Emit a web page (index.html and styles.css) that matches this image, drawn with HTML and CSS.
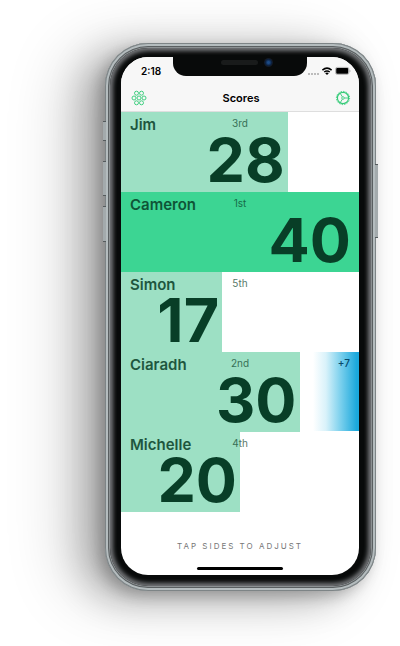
FILE: index.html
```html
<!DOCTYPE html>
<html lang="en">
<head>
<meta charset="utf-8">
<meta name="viewport" content="width=device-width, initial-scale=1">
<title>Scores</title>
<link rel="stylesheet" href="styles.css">
</head>
<body>
<main class="phone">
  <span class="side side-mute"></span>
  <span class="side side-up"></span>
  <span class="side side-down"></span>
  <span class="side side-power"></span>
  <div class="bezel">
    <div class="screen">
      <div class="status">
        <span class="time">2:18</span>
        <div class="notch"><span class="speaker"></span><span class="camera"></span></div>
        <div class="signals">
          <svg width="43" height="10" viewBox="0 0 43 10" aria-hidden="true">
            <g fill="#bcbcbc"><rect x="0" y="7" width="2" height="2"/><rect x="3" y="7" width="2" height="2"/><rect x="6" y="7" width="2" height="2"/><rect x="9" y="7" width="2" height="2"/></g>
            <g fill="none" stroke="#000" stroke-width="1.5"><path d="M14.4 4.1Q19 .2 23.6 4.1"/><path d="M16.2 6Q19 3.8 21.8 6"/></g>
            <path d="M17.2 7.2Q19 6 20.8 7.2L19 9z"/>
            <rect x="27.5" y="1.4" width="13.4" height="7" rx="1.8" fill="none" stroke="#999" stroke-width=".7"/>
            <rect x="28.2" y="2.1" width="12" height="5.6" rx="1"/>
            <path d="M41.7 4v2q.9-.3.9-1t-.9-1z" fill="#999"/>
          </svg>
        </div>
      </div>
      <header class="nav">
        <button class="icon" aria-label="Players">
          <svg width="16" height="16" viewBox="0 0 16 16" fill="none" stroke="#42cf82" stroke-width="1">
            <circle cx="8" cy="8" r="2"/><circle cx="3" cy="8" r="2"/><circle cx="13" cy="8" r="2"/>
            <circle cx="5.5" cy="3.2" r="2"/><circle cx="10.5" cy="3.2" r="2"/><circle cx="5.5" cy="12.8" r="2"/><circle cx="10.5" cy="12.8" r="2"/>
          </svg>
        </button>
        <h1>Scores</h1>
        <button class="icon" aria-label="Settings">
          <svg width="16" height="16" viewBox="0 0 16 16" fill="none" stroke="#35cb78">
            <circle cx="8" cy="8" r="5.6" stroke-width="1.2"/>
            <circle cx="8" cy="8" r="6.6" stroke-width="1" stroke-dasharray="1.3 1.29"/>
            <path d="M9.4 8h4M7.3 6.8 5.2 3.2M7.3 9.2 5.2 12.8" stroke-width=".9"/>
            <circle cx="8" cy="8" r="1.3" stroke-width=".8"/>
          </svg>
        </button>
      </header>
      <ul class="scores">
        <li class="row"><div class="bar" style="width:70%"><span class="score">28</span></div><span class="name">Jim</span><span class="rank">3rd</span></li>
        <li class="row"><div class="bar leader" style="width:100%"><span class="score">40</span></div><span class="name">Cameron</span><span class="rank">1st</span></li>
        <li class="row"><div class="bar" style="width:42.5%"><span class="score">17</span></div><span class="name">Simon</span><span class="rank">5th</span></li>
        <li class="row"><div class="bar" style="width:75%"><span class="score">30</span></div><span class="name">Ciaradh</span><span class="rank">2nd</span><span class="change">+7</span></li>
        <li class="row"><div class="bar" style="width:50%"><span class="score">20</span></div><span class="name">Michelle</span><span class="rank">4th</span></li>
      </ul>
      <p class="hint">TAP SIDES TO ADJUST</p>
      <div class="home"></div>
    </div>
  </div>
</main>
</body>
</html>
```
FILE: styles.css
```css
* { box-sizing: border-box; }
body {
  margin: 0;
  padding: 43px 24px 55px 105px;
  background: #fff;
  font-family: Inter, "Liberation Sans", sans-serif;
  color: #083e27;
}
.phone {
  position: relative;
  padding: 5px;
  border-radius: 43px;
  background: #8b9092;
  box-shadow:
    inset 0 0 0 1px #7d8486,
    inset 0 0 0 3px #b4bcbe,
    inset 0 0 0 4px #5a5f61,
    -5px 5px 14px rgba(0, 0, 0, .2),
    -20px 8px 36px rgba(0, 0, 0, .24),
    -36px 6px 64px rgba(0, 0, 0, .18);
}
.bezel {
  padding: 9px 12px 11px 11px;
  border-radius: 38px;
  background: #080a0a;
  box-shadow: inset 0 0 4px 3px #77797c;
}
.screen {
  display: flex;
  flex-direction: column;
  overflow: hidden;
  border-radius: 27px;
  background: #fff;
}
.status {
  display: grid;
  grid-template-columns: 1fr 134px 1fr;
  height: 28px;
  background: #f7f7f7;
}
.time {
  padding: 7px 0 0 20px;
  font-size: 10px;
  line-height: 14px;
  font-weight: 600;
  color: #000;
  white-space: nowrap;
}
.notch {
  display: flex;
  justify-content: center;
  align-items: flex-start;
  gap: 6px;
  height: 19px;
  padding: 1px 0 0 14px;
  border-radius: 0 0 13px 13px;
  background: #080a0a;
}
.speaker {
  width: 37px;
  height: 5px;
  margin-top: 2px;
  border-radius: 3px;
  background: #191b1b;
}
.camera {
  width: 9px;
  height: 9px;
  border-radius: 50%;
  background: radial-gradient(#1c4b86 15%, #0c1f3c 50%, #15191f 70%);
}
.signals { padding: 9px 0 0 1px; line-height: 0; }
.nav {
  display: flex;
  justify-content: space-between;
  align-items: center;
  height: 27px;
  padding: 0 8px 0 10px;
  border-bottom: 1px solid #dedede;
  background: #f7f7f7;
}
.nav h1 {
  margin: 0;
  font-size: 11px;
  line-height: 16px;
  font-weight: 600;
  color: #000;
}
.icon {
  padding: 0;
  border: 0;
  background: none;
  line-height: 0;
  cursor: pointer;
}
.scores { margin: 0; padding: 0; list-style: none; }
.row {
  display: grid;
  grid-template: 80px / 1fr;
}
.row > * { grid-area: 1 / 1; }
.bar {
  display: flex;
  justify-content: flex-end;
  align-items: flex-end;
  padding: 0 3px 7px 0;
  background: #9de0c4;
}
.leader { padding-right: 8px; background: #3cd593; }
.score {
  font-size: 61px;
  line-height: 50px;
  font-weight: 700;
}
.name {
  justify-self: start;
  padding: 3px 9px;
  font-size: 15px;
  line-height: 20px;
  font-weight: 600;
  opacity: .85;
}
.rank, .change {
  padding-top: 4px;
  font-size: 10px;
  line-height: 14px;
  text-align: center;
  opacity: .7;
}
.rank { justify-self: center; }
.change {
  justify-self: end;
  width: 46px;
  padding-right: 9px;
  margin-bottom: 1px;
  font-weight: 500;
  text-align: right;
  color: #074a6b;
  background: linear-gradient(90deg, #fff, #d9f2fa 28%, #7bd0ed 60%, #1ba8dc 95%);
  opacity: 1;
}
.hint {
  margin: 28px 0 15px;
  font-size: 8px;
  line-height: 12px;
  letter-spacing: 2px;
  text-align: center;
  color: #777;
}
.home {
  width: 86px;
  height: 3px;
  margin: 0 auto 5px;
  border-radius: 2px;
  background: #000;
}
.side {
  position: absolute;
  left: -2px;
  width: 3px;
  border: solid #555b5d;
  border-width: 1px 0;
  background: #a3aaac;
}
.side-mute { top: 78px; height: 20px; }
.side-up { top: 118px; height: 35px; }
.side-down { top: 163px; height: 36px; }
.side-power { top: 121px; right: -2px; left: auto; height: 74px; }
```
